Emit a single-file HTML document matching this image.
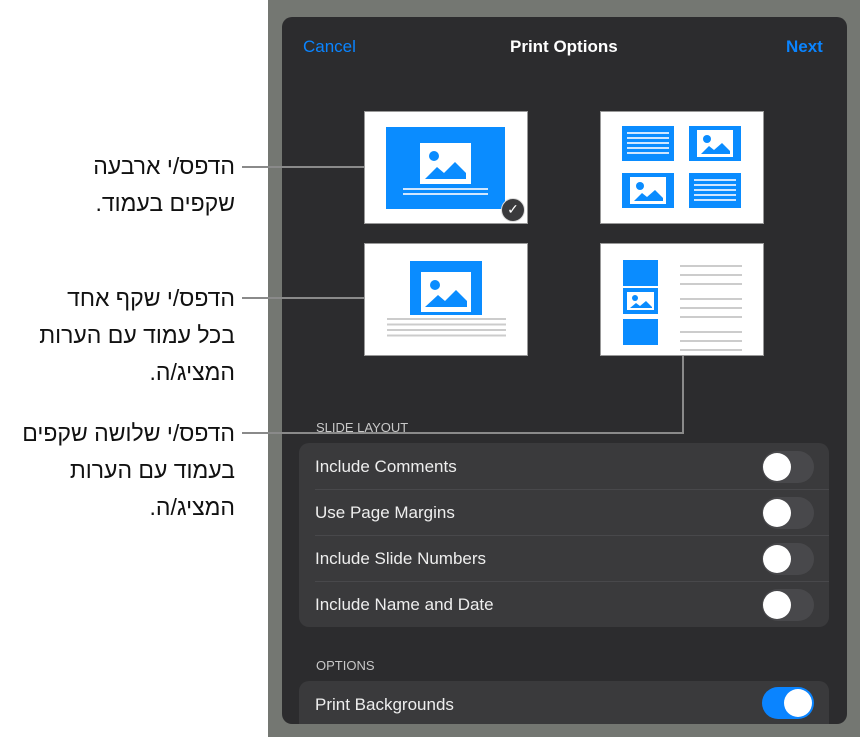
<!DOCTYPE html>
<html><head><meta charset="utf-8"><style>
*{margin:0;padding:0;box-sizing:border-box}
body{width:860px;height:737px;background:#fff;position:relative;overflow:hidden;font-family:"Liberation Sans",sans-serif}
.a{position:absolute}
.heb{position:absolute;right:625px;direction:rtl;text-align:right;font-family:"Liberation Sans","Noto Sans CJK JP",sans-serif;font-size:23px;line-height:37px;color:#111;white-space:nowrap}
.ln{position:absolute;background:#8a8a8a}
.th{position:absolute;background:#fff;width:164px;height:113px;border:1px solid #999}
.b{position:absolute;background:#0a8cff}
.pic{position:absolute;background:#fff}
.row{position:absolute;left:16px;color:#eee;font-size:17px}
.tg{position:absolute;left:463px;width:52px;height:32px;border-radius:16px;background:#48484b}
.tg::after{content:"";position:absolute;left:1px;top:2px;width:28px;height:28px;border-radius:50%;background:#fff}
.sep{position:absolute;left:16px;right:0;height:1px;background:#48484b}
.hd{position:absolute;left:316px;color:#c8c8c8;font-size:13px}
.tl{position:absolute;height:2px;background:#d8d8d8}
</style></head><body>
<div class="a" style="left:268px;top:0;width:592px;height:737px;background:#747772"></div>
<div class="a" style="left:282px;top:17px;width:565px;height:707px;background:#2c2c2e;border-radius:10px"></div>
<div class="a" style="left:303px;top:37px;color:#0a84ff;font-size:17px">Cancel</div>
<div class="a" style="left:510px;top:37px;color:#fff;font-size:17px;font-weight:bold">Print Options</div>
<div class="a" style="left:786px;top:37px;color:#0a84ff;font-size:17px;font-weight:bold">Next</div>

<!-- TL -->
<div class="th" style="left:364px;top:111px">
 <div class="b" style="left:21px;top:15px;width:119px;height:82px">
  <div class="pic" style="left:34px;top:16px;width:51px;height:41px">
   <svg width="51" height="41"><circle cx="14" cy="13" r="5" fill="#0a8cff"/><path d="M5 36 L17 24 L24 30 L35 19 L46 30 L46 36Z" fill="#0a8cff"/></svg></div>
  <div class="tl" style="left:17px;top:61px;width:85px;background:#cfe6ff"></div>
  <div class="tl" style="left:17px;top:66px;width:85px;background:#cfe6ff"></div>
 </div>
 <div class="a" style="left:136px;top:86px;width:24px;height:24px;border-radius:50%;background:#3a3a3c;border:1.5px solid #ddd;color:#fff;font-size:14px;text-align:center;line-height:21px">✓</div>
</div>
<!-- TR -->
<div class="th" style="left:600px;top:111px">
 <div class="b" style="left:21px;top:14px;width:52px;height:35px"><div class="tl" style="left:5px;top:6px;width:42px;height:22px;background:repeating-linear-gradient(#cfe6ff 0 2px,transparent 2px 5px)"></div></div>
 <div class="b" style="left:88px;top:14px;width:52px;height:35px"><div class="pic" style="left:8px;top:4px;width:36px;height:27px"><svg width="36" height="27"><circle cx="10" cy="9" r="4" fill="#0a8cff"/><path d="M4 24 L12 16 L17 20 L25 13 L33 21 L33 24Z" fill="#0a8cff"/></svg></div></div>
 <div class="b" style="left:21px;top:61px;width:52px;height:35px"><div class="pic" style="left:8px;top:4px;width:36px;height:27px"><svg width="36" height="27"><circle cx="10" cy="9" r="4" fill="#0a8cff"/><path d="M4 24 L12 16 L17 20 L25 13 L33 21 L33 24Z" fill="#0a8cff"/></svg></div></div>
 <div class="b" style="left:88px;top:61px;width:52px;height:35px"><div class="tl" style="left:5px;top:6px;width:42px;height:22px;background:repeating-linear-gradient(#cfe6ff 0 2px,transparent 2px 5px)"></div></div>
</div>
<!-- BL -->
<div class="th" style="left:364px;top:243px">
 <div class="b" style="left:45px;top:17px;width:72px;height:54px"><div class="pic" style="left:11px;top:11px;width:50px;height:40px"><svg width="50" height="40"><circle cx="14" cy="13" r="5" fill="#0a8cff"/><path d="M4 35 L17 23 L24 29 L35 18 L46 29 L46 35Z" fill="#0a8cff"/></svg></div></div>
 <div class="tl" style="left:22px;top:74px;width:119px;height:22px;background:repeating-linear-gradient(#ccc 0 2px,transparent 2px 5.5px)"></div>
</div>
<!-- BR -->
<div class="th" style="left:600px;top:243px">
 <div class="b" style="left:22px;top:16px;width:35px;height:26px"></div>
 <div class="b" style="left:22px;top:44px;width:35px;height:26px"><div class="pic" style="left:4px;top:4px;width:27px;height:18px"><svg width="27" height="18"><circle cx="8" cy="6" r="3" fill="#0a8cff"/><path d="M3 16 L9 11 L13 14 L19 9 L25 15 L25 16Z" fill="#0a8cff"/></svg></div></div>
 <div class="b" style="left:22px;top:75px;width:35px;height:26px"></div>
 <div class="tl" style="left:79px;top:21px;width:62px;height:20px;background:repeating-linear-gradient(#ccc 0 2px,transparent 2px 9px)"></div>
 <div class="tl" style="left:79px;top:54px;width:62px;height:20px;background:repeating-linear-gradient(#ccc 0 2px,transparent 2px 9px)"></div>
 <div class="tl" style="left:79px;top:87px;width:62px;height:20px;background:repeating-linear-gradient(#ccc 0 2px,transparent 2px 9px)"></div>
</div>

<div class="hd" style="top:420px">SLIDE LAYOUT</div>
<div class="a" style="left:299px;top:443px;width:530px;height:184px;background:#3a3a3c;border-radius:10px">
 <div class="row" style="top:14px">Include Comments</div><div class="tg" style="top:8px"></div>
 <div class="sep" style="top:46px"></div>
 <div class="row" style="top:60px">Use Page Margins</div><div class="tg" style="top:54px"></div>
 <div class="sep" style="top:92px"></div>
 <div class="row" style="top:106px">Include Slide Numbers</div><div class="tg" style="top:100px"></div>
 <div class="sep" style="top:138px"></div>
 <div class="row" style="top:152px">Include Name and Date</div><div class="tg" style="top:146px"></div>
</div>
<div class="hd" style="top:658px">OPTIONS</div>
<div class="a" style="left:299px;top:681px;width:530px;height:43px;background:#3a3a3c;border-radius:10px 10px 0 0">
 <div class="row" style="top:14px">Print Backgrounds</div>
 <div class="a" style="left:463px;top:6px;width:52px;height:32px;border-radius:16px;background:#0a84ff"><div class="a" style="left:22px;top:2px;width:28px;height:28px;border-radius:50%;background:#fff"></div></div>
</div>

<!-- callouts -->
<div class="ln" style="left:242px;top:166px;width:122px;height:2px"></div>
<div class="ln" style="left:242px;top:297px;width:122px;height:2px"></div>
<div class="ln" style="left:242px;top:432px;width:442px;height:2px"></div>
<div class="ln" style="left:682px;top:356px;width:2px;height:78px"></div>
<div class="heb" style="top:148px">הדפס/י ארבעה<br>שקפים בעמוד.</div>
<div class="heb" style="top:280px">הדפס/י שקף אחד<br>בכל עמוד עם הערות<br>המציג/ה.</div>
<div class="heb" style="top:415px">הדפס/י שלושה שקפים<br>בעמוד עם הערות<br>המציג/ה.</div>
</body></html>
